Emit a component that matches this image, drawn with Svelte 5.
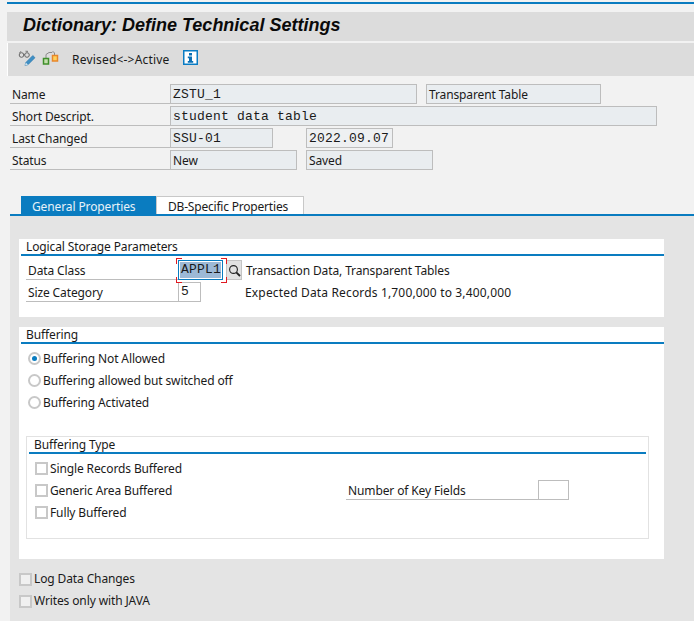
<script>
  const radios = [
    { label: 'Buffering Not Allowed', on: true },
    { label: 'Buffering allowed but switched off', on: false },
    { label: 'Buffering Activated', on: false }
  ];
  const types = ['Single Records Buffered', 'Generic Area Buffered', 'Fully Buffered'];
  const flags = ['Log Data Changes', 'Writes only with JAVA'];
</script>

<div class="app">
  <div class="topline"></div>
  <div class="title">Dictionary: Define Technical Settings</div>
  <div class="toolbar">
    <svg class="ic1" width="18" height="17" viewBox="0 0 18 17" fill="none">
      <circle cx="3.500" cy="5" r="2.300" stroke="#666" stroke-width="1"/>
      <circle cx="9" cy="5" r="2.300" stroke="#666" stroke-width="1"/>
      <path d="M5.800 4.600h1M1.500 3L3 1.200M7.500 1.200l2.500.2" stroke="#666" stroke-width=".9"/>
      <path d="M7 15.500l.8-3 7-7 2.200 2.200-7 7z" fill="#3f8fc4" stroke="#2a76ab" stroke-width=".6"/>
      <path d="M7 15.500l.8-3 2.200 2.200z" fill="#cfe2ee"/>
    </svg>
    <svg class="ic2" width="17" height="16" viewBox="0 0 17 16" fill="none">
      <path d="M4 8V4.500l3-2h3l1-1 1.500 1.500V5" stroke="#8a8a8a" stroke-width="1"/>
      <rect x="1.500" y="8.500" width="5" height="5.500" fill="#c5dfae" stroke="#3f8f2a" stroke-width="1.500"/>
      <rect x="10.500" y="5.500" width="5" height="5.500" fill="#ffd25a" stroke="#e8862a" stroke-width="1.500"/>
    </svg>
    <span class="tbtext">Revised&lt;-&gt;Active</span>
    <svg class="ic3" width="15" height="15" viewBox="0 0 15 15">
      <rect x=".75" y=".75" width="13.500" height="13.500" fill="#fff" stroke="#0a7cc4" stroke-width="1.500"/>
      <rect x="6" y="3" width="3" height="2.500" fill="#0a6fb4"/>
      <path d="M4.800 6.500H9V11h1.200v1.700H4.800V11H6V8.200H4.800z" fill="#0a6fb4"/>
    </svg>
  </div>

  <div class="head">
    <div class="hrow">
      <span class="hlabel">Name</span>
      <span class="field mono w247">ZSTU_1</span>
      <span class="field tt">Transparent Table</span>
    </div>
    <div class="hrow">
      <span class="hlabel">Short Descript.</span>
      <span class="field mono desc">student data table</span>
    </div>
    <div class="hrow">
      <span class="hlabel">Last Changed</span>
      <span class="field mono w103">SSU-01</span>
      <span class="field mono date">2022.09.07</span>
    </div>
    <div class="hrow">
      <span class="hlabel">Status</span>
      <span class="field w127">New</span>
      <span class="field saved">Saved</span>
    </div>
  </div>

  <div class="tabs">
    <div class="tab active">General Properties</div>
    <div class="tab">DB-Specific Properties</div>
  </div>

  <div class="content">
    <section class="group g1">
      <div class="gtitle">Logical Storage Parameters</div>
      <div class="frow first">
        <span class="flabel">Data Class</span>
        <span class="focus">
          <span class="input sel"><span class="selected">APPL1</span><span class="caret"></span></span>
          <i class="c tl"></i><i class="c tr"></i><i class="c bl"></i><i class="c br"></i>
        </span>
        <span class="search">
          <svg width="13" height="13" viewBox="0 0 13 13" fill="none">
            <circle cx="5.500" cy="5.500" r="3.900" stroke="#222" stroke-width="1.100"/>
            <path d="M8.300 8.300l3.700 3.700" stroke="#222" stroke-width="1.800"/>
          </svg>
        </span>
        <span class="ftext t1">Transaction Data, Transparent Tables</span>
      </div>
      <div class="frow">
        <span class="flabel">Size Category</span>
        <span class="input small">5</span>
        <span class="ftext t2">Expected Data Records 1,700,000 to 3,400,000</span>
      </div>
    </section>

    <section class="group g2">
      <div class="gtitle">Buffering</div>
      <div class="radios">
        {#each radios as r}
          <div class="opt"><span class="radio" class:on={r.on}></span><span class="otext">{r.label}</span></div>
        {/each}
      </div>
      <div class="inner">
        <div class="ititle">Buffering Type</div>
        <div class="ibody">
          <div class="checks">
            {#each types as t}
              <div class="opt"><span class="check"></span><span class="otext">{t}</span></div>
            {/each}
          </div>
          <div class="keys">
            <span class="klabel">Number of Key Fields</span>
            <span class="kfield"></span>
          </div>
        </div>
      </div>
    </section>

    <div class="flags">
      {#each flags as f}
        <div class="opt"><span class="check"></span><span>{f}</span></div>
      {/each}
    </div>
  </div>
</div>

<style>
  :global(body) { margin: 0; background: #f2f2f2; }
  .app {
    width: 694px; height: 621px; overflow: hidden; box-sizing: border-box;
    padding: 2px 0 0 7px; background: #f2f2f2; color: #1a1a1a;
    font: 12px/20px "Noto Sans", Tahoma, sans-serif; letter-spacing: -.12px;
  }
  .topline { height: 2px; background: #0a7cc0; }
  .title {
    margin-top: 8px; height: 29px; background: #dcdcdc; padding-left: 16px; box-sizing: border-box;
    font: italic bold 18px/27px "Liberation Sans", Arial, sans-serif; color: #0a0a0a;
    letter-spacing: 0;
  }
  .toolbar {
    margin-top: 2px; height: 33px; background: #dcdcdc; border-left: 1px solid #fff;
    display: flex; align-items: center; box-sizing: border-box;
  }
  .ic1 { margin-left: 10px; margin-top: -3px; }
  .ic2 { margin-left: 6px; margin-top: -3px; }
  .tbtext { margin-left: 13px; line-height: 18px; letter-spacing: .2px; }
  .ic3 { margin-left: 13px; margin-top: -4px; }
  .head { margin: 8px 0 0 3px; display: flex; flex-direction: column; gap: 2px; }
  .hrow { display: flex; height: 20px; }
  .hlabel {
    width: 160px; flex: none; box-sizing: border-box; padding-left: 2px;
    border-bottom: 1px solid #bdbdbd; line-height: 21px;
  }
  .field {
    box-sizing: border-box; height: 20px; background: #e9edf0; border: 1px solid #bdbdbd;
    padding-left: 2px; line-height: 19px; white-space: nowrap;
  }
  .mono { font-family: "Liberation Mono", "DejaVu Sans Mono", monospace; font-size: 13px; letter-spacing: .2px; line-height: 19px; }
  .w247 { width: 247px; }
  .tt { width: 175px; margin-left: 9px; }
  .desc { width: 487px; }
  .w103 { width: 103px; }
  .date { width: 87px; margin-left: 33px; background: #eef0f2; }
  .w127 { width: 127px; }
  .saved { width: 127px; margin-left: 9px; }
  .tabs { margin: 26px 0 0 14px; display: flex; height: 18px; }
  .tab {
    width: 148px; box-sizing: border-box; background: #fff; border: 1px solid #c8c8c8;
    border-bottom: 0; padding-left: 11px; line-height: 20px; letter-spacing: -.2px;
  }
  .tab.active { width: 135px; background: #0a7cc0; color: #e8f2f8; border: 0; line-height: 22px; letter-spacing: -.12px; }
  .content {
    margin-left: 3px; height: 407px; box-sizing: border-box; padding: 23px 30px 0 9px;
    background: #e4e4e4; border-top: 2px solid #0a7cc0;
  }
  .group { background: #fff; }
  .gtitle {
    margin-left: 2px; height: 15px; padding-left: 5px; border-bottom: 2px solid #0a7cc0;
    line-height: 16px;
  }
  .g1 { height: 78px; }
  .frow { display: flex; height: 20px; margin-top: 2px; margin-left: 7px; }
  .frow.first { margin-top: 4px; }
  .flabel {
    width: 152px; box-sizing: border-box; padding-left: 2px; flex: none;
    border-bottom: 1px solid #bdbdbd; line-height: 21px;
  }
  .focus { position: relative; display: block; }
  .input {
    display: block; box-sizing: border-box; height: 20px; background: #fff; border: 1px solid #bdbdbd;
    font: 13px/18px "Liberation Mono", "DejaVu Sans Mono", monospace; letter-spacing: .2px; padding-left: 2px;
  }
  .small { width: 23px; }
  .sel {
    width: 45px; border: 1px solid #0a7cc0; outline: 1px solid #fff; outline-offset: -2px;
    padding-left: 1px; display: flex; height: 20px; align-items: center;
  }
  .selected { background: #9db9d6; height: 16px; line-height: 16px; padding: 0 0 0 1px; }
  .caret { width: 1px; height: 16px; background: #000; }
  .c { position: absolute; width: 5px; height: 5px; border: 0 solid #e01a22; }
  .tl { left: -2px; top: -2px; border-width: 1px 0 0 1px; }
  .tr { right: -4px; top: -2px; border-width: 1px 1px 0 0; }
  .bl { left: -2px; bottom: -3px; border-width: 0 0 1px 1px; }
  .br { right: -4px; bottom: -3px; border-width: 0 1px 1px 0; }
  .search {
    width: 16px; height: 20px; margin-left: 3px; box-sizing: border-box; background: #e2e2e2;
    border: 1px solid #c4c4c4; display: flex; align-items: center; justify-content: center;
  }
  .ftext { line-height: 21px; white-space: nowrap; }
  .t1 { margin-left: 4px; }
  .t2 { margin-left: 44px; letter-spacing: .16px; }
  .g2 { height: 232px; margin-top: 10px; }
  .radios { margin: 4px 0 0 9px; display: flex; flex-direction: column; gap: 2px; }
  .opt { display: flex; align-items: center; height: 20px; white-space: nowrap; }
  .otext { padding-top: 2px; }
  .radio {
    width: 13px; height: 13px; box-sizing: border-box; border: 2px solid #c8c8c8; border-radius: 50%;
    background: #fff; margin-right: 2px; position: relative; flex: none; display: flex;
    align-items: center; justify-content: center;
  }
  .radio.on::after { content: ""; width: 5px; height: 5px; border-radius: 50%; background: #0a7cc0; }
  .inner {
    margin: 24px 15px 0 7px; height: 103px; box-sizing: border-box; border: 1px solid #e2e2e2;
    padding: 0 2px;
  }
  .ititle {
    height: 15px; padding-left: 5px; border-bottom: 2px solid #0a7cc0; line-height: 16px;
  }
  .ibody { display: flex; justify-content: space-between; }
  .checks { margin: 4px 0 0 6px; display: flex; flex-direction: column; gap: 2px; }
  .check {
    width: 13px; height: 13px; box-sizing: border-box; border: 2px solid #c8c8c8; background: #fff;
    flex: none; margin-right: 2px;
  }
  .keys { display: flex; height: 20px; margin: 26px 77px 0 0; }
  .klabel {
    width: 192px; box-sizing: border-box; padding-left: 2px; border-bottom: 1px solid #bdbdbd; line-height: 21px;
  }
  .kfield { width: 31px; box-sizing: border-box; height: 20px; border: 1px solid #bdbdbd; background: #fff; }
  .flags { margin-top: 10px; display: flex; flex-direction: column; gap: 2px; }
  .flags .check { background: #f0f0f0; }
</style>
